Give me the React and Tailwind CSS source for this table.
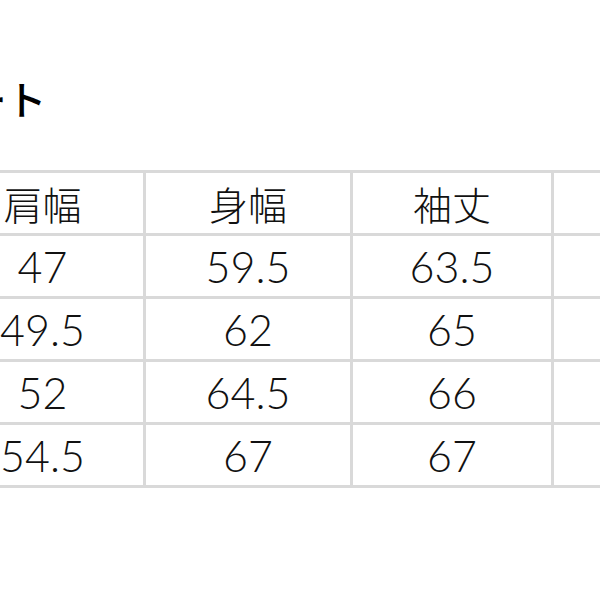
const columns = ['肩幅', '身幅', '袖丈', '着丈'];

const rows = [
  ['47', '59.5', '63.5', '72'],
  ['49.5', '62', '65', '74'],
  ['52', '64.5', '66', '76'],
  ['54.5', '67', '67', '78'],
];

const font = { fontFamily: '"Noto Sans CJK JP", "Noto Sans", sans-serif' };
const numFont = { fontFamily: 'Lato, "Noto Sans CJK JP", sans-serif' };

export default function App() {
  return (
    <div className="h-[600px] w-[600px] overflow-hidden bg-white text-[#111]" style={font}>
      <h1 className="ml-[-232px] mt-[78px] whitespace-nowrap text-[40px] font-medium leading-[40px] text-black">
        サイズチャート
      </h1>

      <div className="mt-[52px] ml-[-61px] w-[900px] bg-[#d9d9d9] py-[3px]">
        <div className="grid grid-cols-[201px_204px_198px_204px_204px] gap-[3px] px-[3px]">
          {columns.map((c) => (
            <div
              key={c}
              className="flex h-[60px] items-center justify-center bg-white text-[39px] font-light leading-none"
            >
              {c}
            </div>
          ))}
          <div className="h-[60px] bg-white" />

          {rows.map((r, i) =>
            [...r, ''].map((v, j) => (
              <div
                key={`${i}-${j}`}
                className="flex h-[60px] items-center justify-center bg-white text-[43px] font-light leading-none"
                style={numFont}
              >
                {v}
              </div>
            ))
          )}
        </div>
      </div>
    </div>
  );
}
